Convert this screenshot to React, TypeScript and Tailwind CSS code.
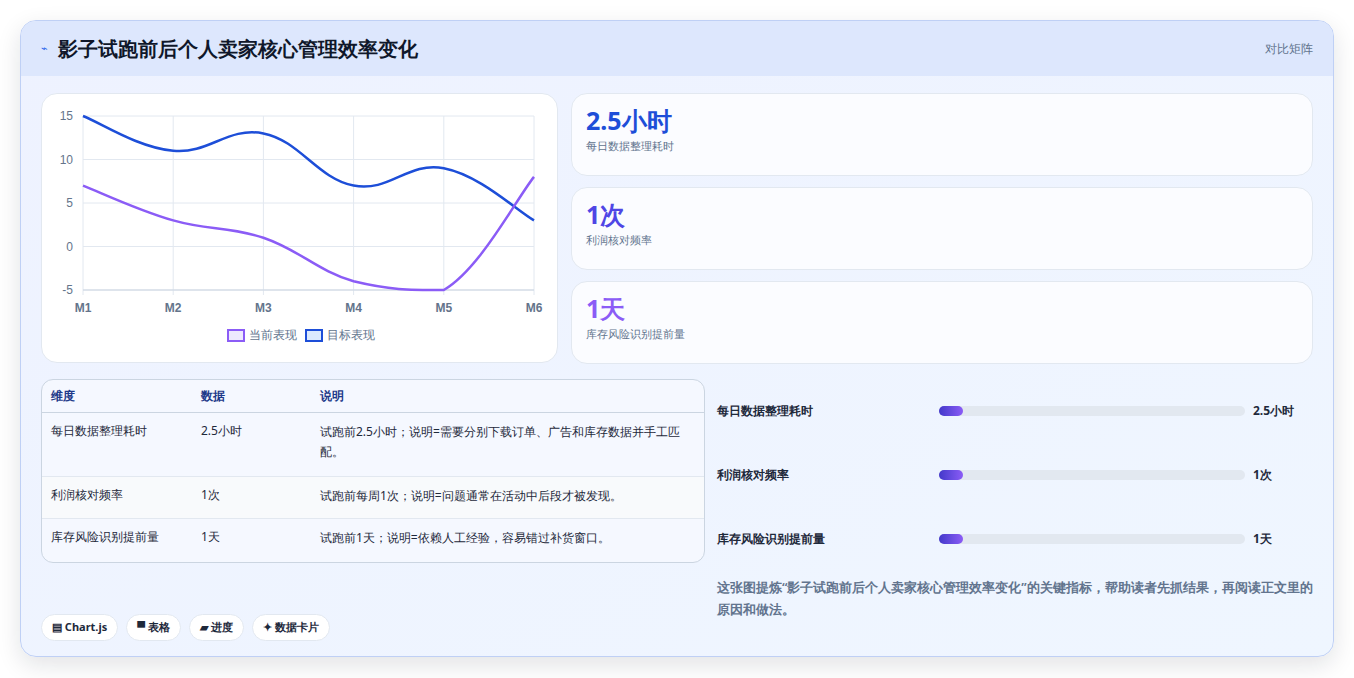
const months = ["M1", "M2", "M3", "M4", "M5", "M6"];
const current = [7, 3, 1, -4, -5, 8];
const target = [15, 11, 13, 7, 9, 3];

const X0 = 37;
const STEP = 90.2;
const px = (i: number) => X0 + i * STEP;
const py = (v: number) => 182 - (v + 5) * 8.7;
const TOP = py(15);
const BOTTOM = py(-5);

// catmull-rom style smoothing similar to Chart.js tension 0.4, capped to the plot area
function curve(vals: number[]) {
  const pts = vals.map((v, i) => [px(i), py(v)]);
  const cap = (y: number) => Math.min(BOTTOM, Math.max(TOP, y));
  let d = `M${pts[0][0]},${pts[0][1]}`;
  const t = 0.2;
  for (let i = 0; i < pts.length - 1; i++) {
    const p0 = pts[i - 1] || pts[i];
    const p1 = pts[i];
    const p2 = pts[i + 1];
    const p3 = pts[i + 2] || p2;
    const c1 = [p1[0] + (p2[0] - p0[0]) * t, cap(p1[1] + (p2[1] - p0[1]) * t)];
    const c2 = [p2[0] - (p3[0] - p1[0]) * t, cap(p2[1] - (p3[1] - p1[1]) * t)];
    d += ` C${c1[0]},${c1[1]} ${c2[0]},${c2[1]} ${p2[0]},${p2[1]}`;
  }
  return d;
}

const Chart = () => (
  <div className="flex flex-col items-center">
    <svg width="510" height="212" className="block">
      {[15, 10, 5, 0, -5].map((v) => (
        <g key={v}>
          <line x1={X0} x2={X0 + 5 * STEP} y1={py(v)} y2={py(v)} stroke="#e2e8f0" />
          <text x={X0 - 10} y={py(v) + 4} textAnchor="end" fontSize="12" fill="#64748b" fontFamily="Liberation Sans, sans-serif">
            {v}
          </text>
        </g>
      ))}
      {months.map((m, i) => (
        <g key={m}>
          <line x1={px(i)} x2={px(i)} y1={TOP} y2={BOTTOM + 5} stroke="#e2e8f0" />
          <text x={px(i)} y={BOTTOM + 22} textAnchor="middle" fontSize="12" fontWeight="bold" fill="#64748b" fontFamily="Liberation Sans, sans-serif">
            {m}
          </text>
        </g>
      ))}
      <line x1={X0} x2={X0 + 5 * STEP} y1={BOTTOM} y2={BOTTOM} stroke="#cbd5e1" />
      <path d={curve(target)} fill="none" stroke="#1d4ed8" strokeWidth="2.5" />
      <path d={curve(current)} fill="none" stroke="#8b5cf6" strokeWidth="2.5" />
    </svg>
    <div className="flex items-center gap-2 text-[12px] text-slate-500 mt-[6px]">
      <span className="flex items-center gap-1">
        <span className="w-[18px] h-[13px] border-2 border-[#8b5cf6] bg-[#ede9fe]" />当前表现
      </span>
      <span className="flex items-center gap-1">
        <span className="w-[18px] h-[13px] border-2 border-[#1d4ed8] bg-[#dbeafe]" />目标表现
      </span>
    </div>
  </div>
);

const stats = [
  { v: "2.5小时", l: "每日数据整理耗时", c: "text-[#1d4ed8]" },
  { v: "1次", l: "利润核对频率", c: "text-[#4f46e5]" },
  { v: "1天", l: "库存风险识别提前量", c: "text-[#8b5cf6]" },
];

const rows = [
  { d: "每日数据整理耗时", v: "2.5小时", n: "试跑前2.5小时；说明=需要分别下载订单、广告和库存数据并手工匹配。", h: "h-[64px]", bg: "" },
  { d: "利润核对频率", v: "1次", n: "试跑前每周1次；说明=问题通常在活动中后段才被发现。", h: "h-[42px]", bg: "bg-[#f8fafc]" },
  { d: "库存风险识别提前量", v: "1天", n: "试跑前1天；说明=依赖人工经验，容易错过补货窗口。", h: "h-[43px]", bg: "" },
];

export default function App() {
  return (
    <div className="w-[1354px] h-[678px] bg-white p-5 font-['Inter','Noto_Sans_CJK_SC',sans-serif]">
      <div className="h-[637px] rounded-2xl border border-[#bfd0f5] bg-gradient-to-br from-[#eef2ff] to-[#eff6ff] shadow-[0_8px_24px_rgba(15,23,42,0.12)] overflow-hidden flex flex-col">
        <div className="h-[55px] shrink-0 bg-[#dde7fd] flex items-center justify-between px-5">
          <div className="flex items-center gap-[10px]">
            <span className="text-[#2563eb] text-[11px]">⌁</span>
            <span className="text-[20px] font-extrabold text-[#0f172a]">影子试跑前后个人卖家核心管理效率变化</span>
          </div>
          <span className="text-[12px] text-slate-500">对比矩阵</span>
        </div>
        <div className="flex-1 px-5 pt-[17px] pb-5 flex flex-col">
          <div className="flex gap-[13px]">
            <div className="w-[517px] h-[270px] bg-white rounded-2xl border border-[#e2e8f0] pt-[14px] pl-[3px]">
              <Chart />
            </div>
            <div className="flex-1 flex flex-col gap-[11px]">
              {stats.map((s) => (
                <div key={s.l} className="h-[83px] bg-[#fbfcff] rounded-2xl border border-[#e2e8f0] px-[14px] pt-[10px]">
                  <div className={`text-[25px] font-bold leading-[32px] ${s.c}`}>{s.v}</div>
                  <div className="text-[11px] text-slate-500 mt-[2px]">{s.l}</div>
                </div>
              ))}
            </div>
          </div>
          <div className="flex gap-3 mt-[15px]">
            <div className="w-[664px]">
              <div className="rounded-xl border border-[#cbd5e1] overflow-hidden bg-[#f5f8ff] text-[12px]">
                <div className="h-[33px] flex items-center border-b border-[#cbd5e1] text-[#1e3a8a] font-semibold">
                  <span className="w-[159px] pl-[9px]">维度</span>
                  <span className="w-[119px]">数据</span>
                  <span>说明</span>
                </div>
                {rows.map((r, i) => (
                  <div key={r.d} className={`flex items-start pt-[9px] ${r.h} ${r.bg} ${i < 2 ? "border-b border-[#e2e8f0]" : ""} text-[#1e293b]`}>
                    <span className="w-[159px] pl-[9px] font-medium">{r.d}</span>
                    <span className="w-[119px]">{r.v}</span>
                    <span className="flex-1 pr-2 leading-[20px]">{r.n}</span>
                  </div>
                ))}
              </div>
              <div className="flex gap-2 mt-[51px]">
                {["▤ Chart.js", "▀ 表格", "▰ 进度", "✦ 数据卡片"].map((c) => (
                  <span key={c} className="h-[27px] px-[10px] rounded-full bg-white border border-[#e2e8f0] text-[11px] font-bold text-[#1e293b] flex items-center">
                    {c}
                  </span>
                ))}
              </div>
            </div>
            <div className="flex-1 flex flex-col">
              {[
                ["每日数据整理耗时", "2.5小时"],
                ["利润核对频率", "1次"],
                ["库存风险识别提前量", "1天"],
              ].map(([l, v]) => (
                <div key={l} className="h-[64px] flex items-center text-[12px] font-semibold text-[#1e293b]">
                  <span className="w-[222px]">{l}</span>
                  <div className="w-[306px] h-[10px] rounded-full bg-[#e2e8f0]">
                    <div className="w-[24px] h-full rounded-full bg-gradient-to-r from-[#4338ca] to-[#8b5cf6]" />
                  </div>
                  <span className="ml-2 font-bold">{v}</span>
                </div>
              ))}
              <p className="mt-[5px] text-[13px] leading-[22px] font-semibold text-slate-500">
                这张图提炼“影子试跑前后个人卖家核心管理效率变化”的关键指标，帮助读者先抓结果，再阅读正文里的原因和做法。
              </p>
            </div>
          </div>
        </div>
      </div>
    </div>
  );
}
